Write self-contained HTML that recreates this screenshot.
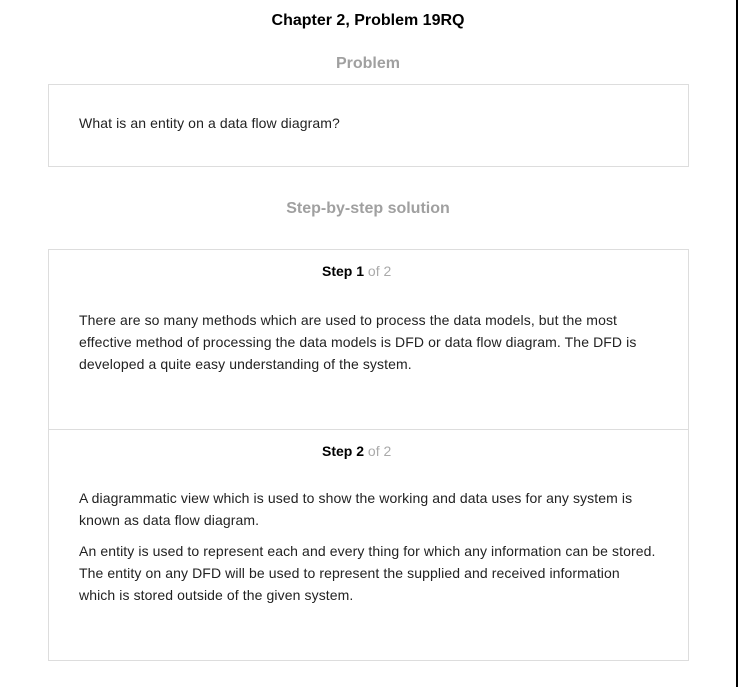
<!DOCTYPE html>
<html><head><style>
body{margin:0;width:738px;height:687px;background:#fff;font-family:"Liberation Sans",Arial,sans-serif;position:relative;overflow:hidden;color:#222}
.a{position:absolute;white-space:nowrap}
.c{left:0;width:736px;text-align:center}
.box{position:absolute;left:48px;width:639px;border:1px solid #ddd}
p{position:absolute;left:79px;margin:0;font-size:14px;letter-spacing:0.1px;line-height:22px;color:#222;white-space:nowrap}
.s{font-size:14px;color:#000;left:322px}
.s span{color:#aaa}
</style></head><body>
<div style="position:absolute;left:736px;top:0;width:2px;height:687px;background:#000"></div>
<div class="a c" style="top:12px;font-size:16px;font-weight:bold;color:#000">Chapter 2, Problem 19RQ</div>
<div class="a c" style="top:55px;font-size:16px;font-weight:bold;color:#a0a0a0">Problem</div>
<div class="box" style="top:84px;height:81px"></div>
<p style="top:112px">What is an entity on a data flow diagram?</p>
<div class="a c" style="top:200px;font-size:16px;font-weight:bold;color:#a0a0a0">Step-by-step solution</div>
<div class="box" style="top:249px;height:410px"></div>
<div style="position:absolute;left:49px;width:639px;top:429px;height:1px;background:#ddd"></div>
<div class="a s" style="top:263px"><b>Step 1</b> <span>of 2</span></div>
<p style="top:309px">There are so many methods which are used to process the data models, but the most<br>effective method of processing the data models is DFD or data flow diagram. The DFD is<br>developed a quite easy understanding of the system.</p>
<div class="a s" style="top:443px"><b>Step 2</b> <span>of 2</span></div>
<p style="top:487px">A diagrammatic view which is used to show the working and data uses for any system is<br>known as data flow diagram.</p>
<p style="top:540px">An entity is used to represent each and every thing for which any information can be stored.<br>The entity on any DFD will be used to represent the supplied and received information<br>which is stored outside of the given system.</p>
</body></html>
